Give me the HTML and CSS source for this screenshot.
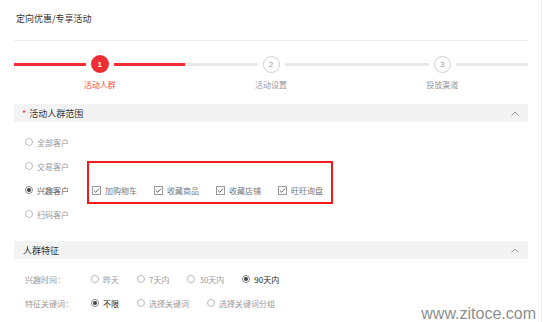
FILE: index.html
```html
<!DOCTYPE html>
<html lang="zh-CN">
<head>
<meta charset="utf-8">
<title>定向优惠/专享活动</title>
<link rel="stylesheet" href="styles.css">
</head>
<body>
<div class="page">
  <div class="inner">
    <div class="title">定向优惠/专享活动</div>

    <div class="steps">
      <div class="step">
        <div class="track">
          <span class="line on"></span>
          <span class="circle active">1</span>
          <span class="line on"></span>
        </div>
        <div class="step-label active">活动人群</div>
      </div>
      <div class="step">
        <div class="track">
          <span class="line"></span>
          <span class="circle">2</span>
          <span class="line"></span>
        </div>
        <div class="step-label">活动设置</div>
      </div>
      <div class="step">
        <div class="track">
          <span class="line"></span>
          <span class="circle">3</span>
          <span class="line"></span>
        </div>
        <div class="step-label">投放渠道</div>
      </div>
    </div>

    <div class="section-head">
      <span class="head-text"><span class="req">*</span>活动人群范围</span>
      <svg class="chev" width="8" height="5" viewBox="0 0 8 5"><polyline points="0.5,4.5 4,1 7.5,4.5" fill="none" stroke="#999" stroke-width="1"/></svg>
    </div>

    <div class="options">
      <div class="opt-row"><span class="radio"></span><span class="opt-text">全部客户</span></div>
      <div class="opt-row"><span class="radio"></span><span class="opt-text">交易客户</span></div>
      <div class="opt-row with-box">
        <span class="radio checked"></span><span class="opt-text sel">兴趣客户</span>
        <div class="cb-group">
          <span class="cb-item"><svg class="cb" width="9" height="9" viewBox="0 0 9 9"><rect x="0.5" y="0.5" width="8" height="8" fill="#fff" stroke="#9a9a9a"/><polyline points="2,4.6 3.8,6.3 7,2.6" fill="none" stroke="#666" stroke-width="1"/></svg><span>加购物车</span></span>
          <span class="cb-item"><svg class="cb" width="9" height="9" viewBox="0 0 9 9"><rect x="0.5" y="0.5" width="8" height="8" fill="#fff" stroke="#9a9a9a"/><polyline points="2,4.6 3.8,6.3 7,2.6" fill="none" stroke="#666" stroke-width="1"/></svg><span>收藏商品</span></span>
          <span class="cb-item"><svg class="cb" width="9" height="9" viewBox="0 0 9 9"><rect x="0.5" y="0.5" width="8" height="8" fill="#fff" stroke="#9a9a9a"/><polyline points="2,4.6 3.8,6.3 7,2.6" fill="none" stroke="#666" stroke-width="1"/></svg><span>收藏店铺</span></span>
          <span class="cb-item"><svg class="cb" width="9" height="9" viewBox="0 0 9 9"><rect x="0.5" y="0.5" width="8" height="8" fill="#fff" stroke="#9a9a9a"/><polyline points="2,4.6 3.8,6.3 7,2.6" fill="none" stroke="#666" stroke-width="1"/></svg><span>旺旺询盘</span></span>
        </div>
        <div class="red-box"></div>
      </div>
      <div class="opt-row"><span class="radio"></span><span class="opt-text">扫码客户</span></div>
    </div>

    <div class="section-head second">
      <span class="head-text plain">人群特征</span>
      <svg class="chev" width="8" height="5" viewBox="0 0 8 5"><polyline points="0.5,4.5 4,1 7.5,4.5" fill="none" stroke="#999" stroke-width="1"/></svg>
    </div>

    <div class="features">
      <div class="feat-row">
        <span class="feat-label">兴趣时间：</span>
        <span class="feat-opt"><span class="radio"></span><span class="opt-text">昨天</span></span>
        <span class="feat-opt"><span class="radio"></span><span class="opt-text">7天内</span></span>
        <span class="feat-opt"><span class="radio"></span><span class="opt-text">30天内</span></span>
        <span class="feat-opt"><span class="radio checked"></span><span class="opt-text strong">90天内</span></span>
      </div>
      <div class="feat-row">
        <span class="feat-label">特征关键词：</span>
        <span class="feat-opt"><span class="radio checked"></span><span class="opt-text strong">不限</span></span>
        <span class="feat-opt"><span class="radio"></span><span class="opt-text">选择关键词</span></span>
        <span class="feat-opt"><span class="radio"></span><span class="opt-text">选择关键词分组</span></span>
      </div>
    </div>
  </div>
  <div class="watermark">www.zitoce.com</div>
</div>
</body>
</html>
```
FILE: styles.css
```css
* { box-sizing: border-box; }
html, body { margin: 0; padding: 0; background: #fff; }
body { font-family: "Noto Sans CJK SC", "Noto Sans", sans-serif; }

.page {
  position: relative;
  width: 542px;
  height: 322px;
  border-right: 1px solid #ededed;
  overflow: hidden;
  background: #fff;
}
.inner { margin-left: 14px; width: 514px; }

.title {
  height: 41px;
  border-bottom: 1px solid #eeeeee;
  display: flex;
  align-items: center;
  padding: 0 0 3px 2px;
  font-size: 9px;
  color: #333;
}

.steps {
  display: grid;
  grid-template-columns: repeat(3, 1fr);
  height: 63px;
  padding-top: 14px;
}
.step { display: flex; flex-direction: column; align-items: center; }
.track { display: flex; align-items: center; width: 100%; height: 18px; gap: 5px; }
.line { flex: 1; height: 3px; background: #e9e9e9; margin-top: 1px; }
.line.on { background: #ee2d35; }
.circle {
  width: 17px; height: 17px;
  border-radius: 50%;
  border: 1.5px solid #cfcfcf;
  display: flex; align-items: center; justify-content: center;
  font-family: "Liberation Sans", sans-serif;
  font-size: 8px; color: #999;
}
.circle.active { width: 18px; height: 18px; border: none; background: #ee2d35; color: #fff; font-weight: bold; }
.step-label { margin-top: 6px; font-size: 8px; line-height: 12px; color: #999; }
.step-label.active { color: #f0484e; }

.section-head {
  height: 18px;
  background: #f3f3f3;
  display: flex;
  align-items: center;
  justify-content: space-between;
  padding: 0 9px 0 8px;
  font-size: 9px;
  color: #333;
}
.section-head.second { margin-top: 15px; }
.head-text.plain { padding-left: 1px; }
.req { color: #ee2d35; margin-right: 3px; }
.chev { display: block; }

.options { padding: 8px 0 0 11px; }
.opt-row { position: relative; display: flex; align-items: center; height: 24px; }
.radio {
  width: 8px; height: 8px;
  border: 1px solid #b9b9b9;
  border-radius: 50%;
  display: inline-flex; align-items: center; justify-content: center;
  flex: none;
}
.radio.checked { border-color: #888; }
.radio.checked::after { content: ""; width: 4px; height: 4px; border-radius: 50%; background: #444; }
.opt-text { margin-left: 4px; font-size: 8px; color: #999; white-space: nowrap; }
.opt-text.sel { color: #555; }
.opt-text.strong { color: #222; }

.cb-group { display: flex; margin-left: 23px; gap: 17px; }
.cb-item { display: inline-flex; align-items: center; font-size: 8px; color: #777; white-space: nowrap; }
.cb { display: block; margin-right: 4px; }
.red-box {
  position: absolute;
  left: 62px; top: -17px;
  width: 246px; height: 43px;
  border: 2px solid #f21a1a;
}

.features { padding: 8px 0 0 11px; }
.feat-row { display: flex; align-items: center; height: 24px; }
.feat-label { width: 66px; font-size: 8px; color: #999; }
.feat-opt { display: inline-flex; align-items: center; margin-right: 18px; }

.watermark {
  position: absolute;
  right: 5px; bottom: 0;
  font-family: "Liberation Sans", Arial, sans-serif;
  font-size: 16px; line-height: 16px;
  color: #8e8e8e;
}
```
